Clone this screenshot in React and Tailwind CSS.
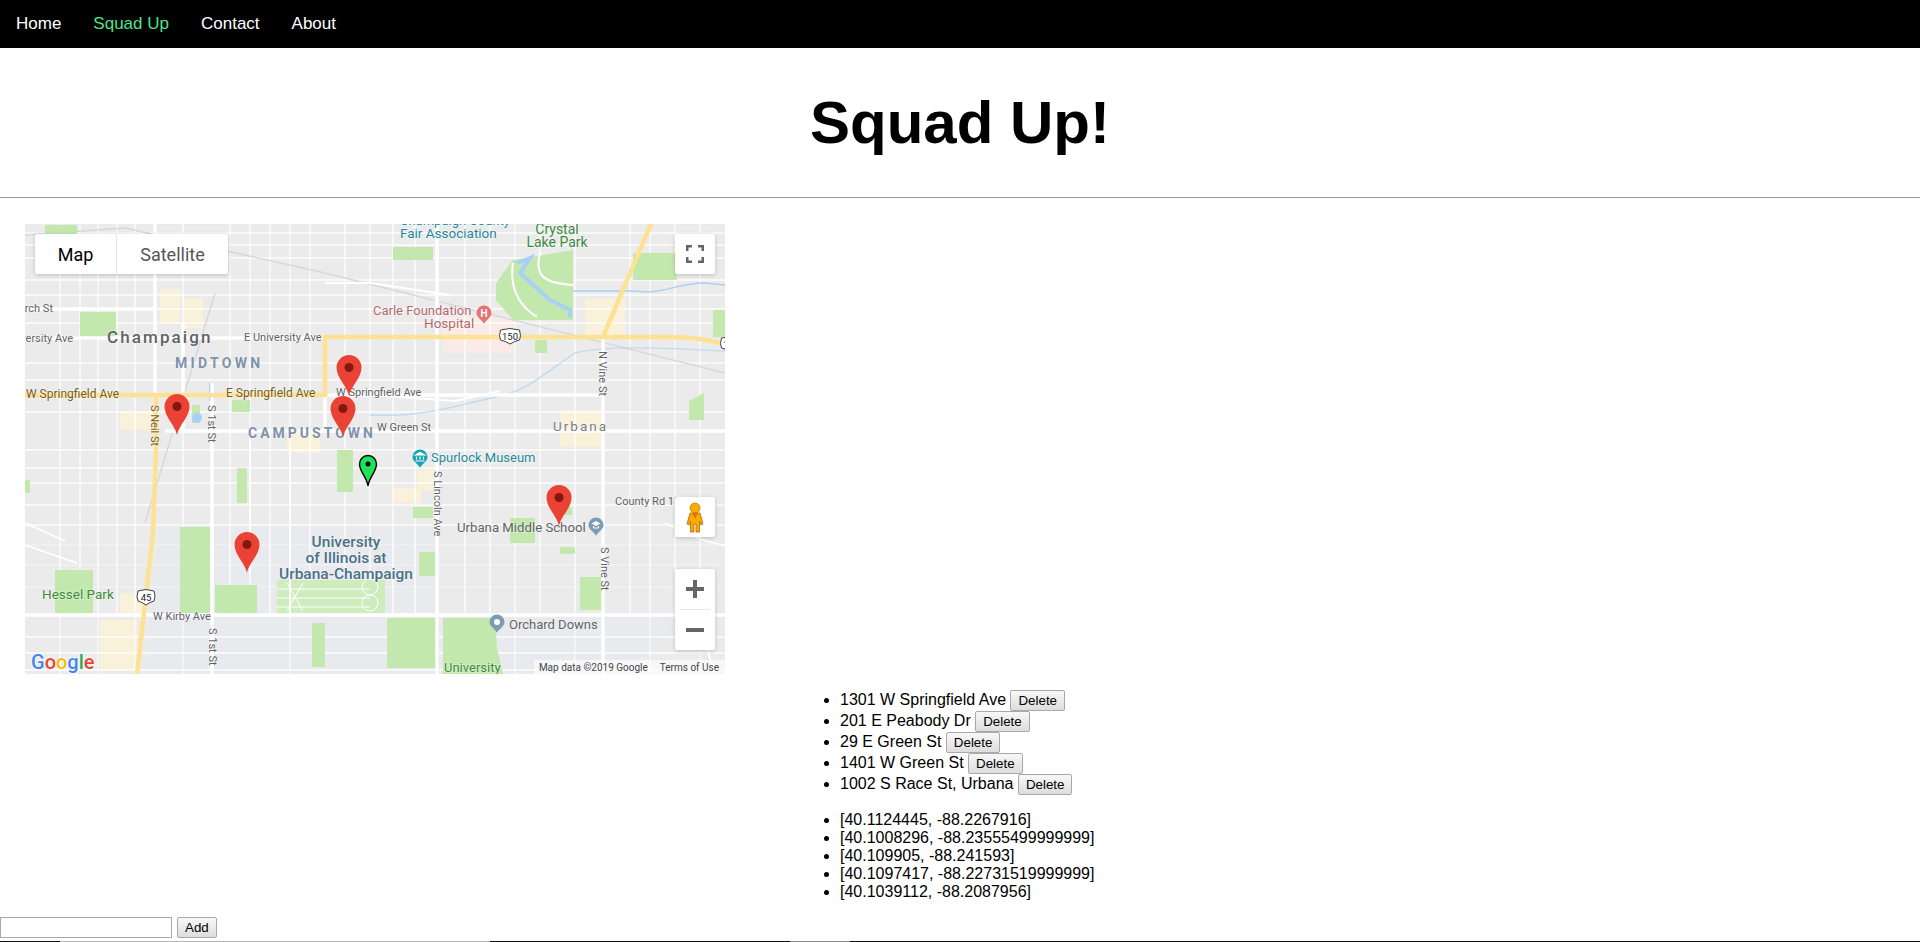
import React from 'react'

const minorY = [10, 22, 35, 57, 72, 86, 100, 140, 157, 189, 227, 245, 260, 282, 302, 322, 342, 364, 414, 430, 447]
const minorX = [35, 55, 73, 92, 110, 158, 205, 225, 245, 265, 285, 320, 345, 368, 390, 440, 465, 490, 515, 550, 605, 625, 650, 675]

const parks = [
  [55, 89, 36, 25], [20, 2, 32, 9], [368, 24, 40, 13], [608, 30, 44, 27], [510, 117, 12, 13],
  [688, 87, 12, 27], [155, 304, 30, 86], [30, 347, 38, 43], [212, 245, 10, 35], [312, 227, 16, 42],
  [190, 362, 42, 28], [362, 395, 51, 50], [485, 295, 25, 25], [555, 354, 23, 33],
  [394, 329, 18, 24], [388, 284, 20, 11], [287, 400, 13, 44], [167, 182, 8, 18], [207, 177, 18, 12],
  [533, 284, 14, 8], [535, 324, 15, 7], [0, 257, 5, 13],
]

const beige = [
  [135, 66, 20, 35], [158, 75, 20, 30], [95, 189, 33, 18], [560, 76, 40, 38], [535, 187, 43, 37], [75, 397, 37, 50],
  [95, 370, 23, 24], [262, 210, 33, 20], [368, 265, 28, 15], [392, 247, 16, 20],
]

const MapText = ({ x, y, size = 11, color = '#5f6368', weight = 400, spacing, anchor, rotate, children }) => (
  <text
    x={x}
    y={y}
    fontSize={size}
    fill={color}
    fontWeight={weight}
    letterSpacing={spacing}
    textAnchor={anchor}
    transform={rotate ? `rotate(90 ${x} ${y})` : undefined}
    fontFamily="Roboto, sans-serif"
    stroke="#ffffff"
    strokeWidth="1.6"
    strokeOpacity="0.4"
    paintOrder="stroke"
  >
    {children}
  </text>
)

const Pin = ({ x, y }) => (
  <g transform={`translate(${x} ${y})`}>
    <path d="M0 0C-2-10-12.5-18-12.5-28.5A12.5 12.5 0 1 1 12.5-28.5C12.5-18 2-10 0 0Z" fill="#ea4335" />
    <circle cx="0" cy="-28.5" r="4.5" fill="#84170f" />
  </g>
)

const GreenPin = ({ x, y }) => (
  <g transform={`translate(${x} ${y})`}>
    <path d="M0 0C-1-9-8.5-14-8.5-22A8.5 8.5 0 1 1 8.5-22C8.5-14 1-9 0 0Z" fill="#1fe25b" stroke="#000000" strokeWidth="1.4" />
    <circle cx="0" cy="-22" r="2.5" fill="#000000" />
  </g>
)

const Poi = ({ x, y, color, children }) => (
  <g transform={`translate(${x} ${y})`}>
    <path d="M0 10C-1.5 6-7.5 3.5-7.5-1A7.5 7.5 0 1 1 7.5-1C7.5 3.5 1.5 6 0 10Z" fill={color} />
    {children}
  </g>
)

const Shield = ({ x, y, label, width = 20 }) => (
  <g transform={`translate(${x} ${y})`}>
    <path
      d={`M${-width / 2}-6Q0-9 ${width / 2}-6Q${width / 2 + 2} 0 ${width / 2}  4Q${width / 4} 5 0 8Q${-width / 4} 5 ${-width / 2} 4Q${-width / 2 - 2} 0 ${-width / 2}-6Z`}
      fill="#ffffff"
      stroke="#3c4043"
      strokeWidth="1"
    />
    <text x="0" y="3.5" fontSize="9.5" textAnchor="middle" fill="#202124" fontFamily="Roboto, sans-serif">{label}</text>
  </g>
)

const MapCanvas = () => (
  <svg viewBox="0 0 700 450" className="block w-[700px] h-[450px]">
    <rect width="700" height="450" fill="#ebebeb" />
    <g transform="translate(0 -1)">
      {/* campus ground */}
      <polygon points="120,451 135,302 250,302 250,451" fill="#e8eaed" />
      <polygon points="250,392 700,392 700,395 580,451 250,451" fill="#e8eaed" />
      <polygon points="250,302 412,302 412,392 250,392" fill="#e8eaed" />

      {beige.map(([x, y, w, h]) => <rect key={`${x}-${y}`} x={x} y={y} width={w} height={h} fill="#f9f1da" />)}
      <rect x="418" y="94" width="70" height="36" fill="#faebe7" />

      {minorY.map((y) => (
        <line key={y} x1="0" x2="700" y1={y} y2={y} stroke="#ffffff" strokeWidth="1.4" opacity={y > 302 && y < 392 ? 0.35 : 0.9} />
      ))}
      {minorX.map((x) => <line key={x} x1={x} x2={x} y1="0" y2="392" stroke="#ffffff" strokeWidth="1.4" opacity="0.9" />)}
      <path d="M35 392V451M73 392V451M110 392V451M158 392V451M265 392V451M490 392V451M550 392V451M625 392V451M675 392V451" stroke="#ffffff" strokeWidth="1.2" opacity="0.8" />
      <path d="M0 322L52 340M0 300L40 318M640 300C660 310 680 320 700 322M660 355L690 451" stroke="#ffffff" strokeWidth="1.8" fill="none" />
      <path d="M190 70L120 300" stroke="#d8d8d8" strokeWidth="1.5" fill="none" />
      <path d="M0 12L100 5L300 50L700 150" stroke="#d8d8d8" strokeWidth="1.5" fill="none" />

      {parks.map(([x, y, w, h]) => <rect key={`${x}-${y}`} x={x} y={y} width={w} height={h} rx="1" fill="#c3e8ae" />)}
      <polygon points="471,60 488,37 548,27 548,97 488,97 471,77" fill="#c3e8ae" />
      <polygon points="418,395 470,395 472,425 478,451 418,451" fill="#c3e8ae" />
      <polygon points="664,178 679,170 679,197 664,197" fill="#c3e8ae" />

      {/* quad and its walks */}
      <rect x="252" y="357" width="108" height="33" fill="#cfecbd" />
      <path d="M252 366H345M252 375H345M252 384H345M262 360L278 388M278 360L262 388" stroke="#ffffff" strokeWidth="1" />
      <circle cx="345" cy="364" r="8" fill="none" stroke="#ffffff" />
      <circle cx="345" cy="380" r="8" fill="none" stroke="#ffffff" />

      {/* water */}
      <path d="M492 40L505 35L495 50L525 77L545 87V95" stroke="#a9d0f5" strokeWidth="4" fill="none" />
      <path d="M488 40C485 60 490 80 512 94M515 30C510 50 515 60 548 62" stroke="#ffffff" strokeWidth="2" fill="none" />
      <path d="M548 68H610C640 72 650 60 680 60L700 62" stroke="#a9d0f5" strokeWidth="1.3" fill="none" />
      <path d="M345 192C400 195 440 180 480 172C505 165 520 150 550 130C580 122 640 125 700 128" stroke="#b8d6f0" strokeWidth="1.3" fill="none" opacity="0.8" />
      <path d="M186 160V178" stroke="#a9d0f5" strokeWidth="4" />
      <circle cx="172" cy="195" r="5" fill="#a9d0f5" />

      {/* big white streets */}
      <path d="M130 0V172M187 160V451M412 0V451M578 114V451M0 392H700M0 115H300M140 208H700M300 172H580M0 86H130M300 115V208M158 100V208" stroke="#ffffff" strokeWidth="3.5" fill="none" />
      <path d="M300 60H345L425 72M345 172L430 178L475 168M225 205V350M265 225V392" stroke="#ffffff" strokeWidth="2" fill="none" />

      {/* yellow roads */}
      <path d="M0 172H300V114H640C665 114 685 116 700 122" stroke="#fde293" strokeWidth="4.5" fill="none" />
      <path d="M578 114L628 -4" stroke="#fde293" strokeWidth="4.5" fill="none" />
      <path d="M131 172V227L128 310L112 451" stroke="#fde293" strokeWidth="4.5" fill="none" />

      <MapText x={28} y={89} anchor="end">Church St</MapText>
      <MapText x={48} y={119} anchor="end">University Ave</MapText>
      <MapText x={219} y={118}>E University Ave</MapText>
      <MapText x={82} y={120} size={17} weight={500} spacing={2.1}>Champaign</MapText>
      <MapText x={150} y={145} size={14} weight={700} spacing={3.3} color="#7f92ac">MIDTOWN</MapText>
      <MapText x={1} y={175} size={12} color="#795c17">W Springfield Ave</MapText>
      <MapText x={201} y={174} size={12} color="#795c17">E Springfield Ave</MapText>
      <MapText x={311} y={173}>W Springfield Ave</MapText>
      <MapText x={126} y={182} rotate color="#795c17">S Neil St</MapText>
      <MapText x={183} y={182} rotate>S 1st St</MapText>
      <MapText x={184} y={405} rotate>S 1st St</MapText>
      <MapText x={223} y={215} size={14} weight={700} spacing={3} color="#7f92ac">CAMPUSTOWN</MapText>
      <MapText x={352} y={208}>W Green St</MapText>
      <MapText x={528} y={208} size={13.5} spacing={2} color="#7b7f85">Urbana</MapText>
      <MapText x={406} y={239} size={13} color="#1f8a99">Spurlock Museum</MapText>
      <MapText x={409} y={248} rotate>S Lincoln Ave</MapText>
      <MapText x={375} y={2} size={13} color="#1f8a99">Champaign County</MapText>
      <MapText x={375} y={15} size={13.5} color="#1f8a99">Fair Association</MapText>
      <MapText x={532} y={11} size={14} anchor="middle" color="#3c8a3f">Crystal</MapText>
      <MapText x={532} y={24} size={14} anchor="middle" color="#3c8a3f">Lake Park</MapText>
      <MapText x={348} y={92} size={13} color="#b3696a">Carle Foundation</MapText>
      <MapText x={399} y={105} size={13.5} color="#b3696a">Hospital</MapText>
      <MapText x={574} y={128} rotate>N Vine St</MapText>
      <MapText x={576} y={324} rotate>S Vine St</MapText>
      <MapText x={590} y={282}>County Rd 15</MapText>
      <MapText x={432} y={309} size={13.2}>Urbana Middle School</MapText>
      <MapText x={484} y={406} size={13}>Orchard Downs</MapText>
      <MapText x={419} y={449} size={13} color="#3c8a3f">University</MapText>
      <MapText x={321} y={324} size={15.5} weight={500} anchor="middle" color="#4a7186">University</MapText>
      <MapText x={321} y={340} size={15.5} weight={500} anchor="middle" color="#4a7186">of Illinois at</MapText>
      <MapText x={321} y={356} size={15.5} weight={500} anchor="middle" color="#4a7186">Urbana-Champaign</MapText>
      <MapText x={128} y={397}>W Kirby Ave</MapText>
      <MapText x={17} y={376} size={13.5} color="#3c8a3f">Hessel Park</MapText>

      <Shield x={485} y={113} label="150" width={19} />
      <Shield x={706} y={121} label="150" width={19} />
      <Shield x={121} y={374} label="45" width={16} />

      <Poi x={459} y={91} color="#e57373">
        <text x="0" y="3" fontSize="10" textAnchor="middle" fill="#ffffff" fontWeight="700" fontFamily="Roboto, sans-serif">H</text>
      </Poi>
      <Poi x={395} y={235} color="#12a5b5">
        <path d="M-4.5 3H4.5M-3.5 1.5V-1.5M0 1.5V-1.5M3.5 1.5V-1.5M-4.5-3L0-5.5L4.5-3Z" stroke="#ffffff" strokeWidth="1.2" fill="#ffffff" />
      </Poi>
      <Poi x={571} y={303} color="#7c9cb4">
        <path d="M-4.5-2.5L0-5L4.5-2.5L0 0Z" fill="#ffffff" />
        <path d="M-2.5 0V2H2.5V0" stroke="#ffffff" fill="none" />
      </Poi>
      <Poi x={472} y={400} color="#7c9cb4">
        <circle cx="0" cy="-1" r="3" fill="#ffffff" />
      </Poi>

      <Pin x={152} y={212} />
      <Pin x={324} y={173} />
      <Pin x={318} y={214} />
      <Pin x={222} y={350} />
      <Pin x={534} y={303} />
      <GreenPin x={343} y={263} />

      {/* google mark */}
      <text x={6} y={446} fontSize="20" fontWeight="500" fontFamily="Roboto, sans-serif" stroke="#ffffff" strokeWidth="2" strokeOpacity="0.7" paintOrder="stroke">
        <tspan fill="#4285f4">G</tspan>
        <tspan fill="#ea4335">o</tspan>
        <tspan fill="#fbbc05">o</tspan>
        <tspan fill="#4285f4">g</tspan>
        <tspan fill="#34a853">l</tspan>
        <tspan fill="#ea4335">e</tspan>
      </text>
    </g>
  </svg>
)

const MapWidget = () => (
  <div className="relative w-[700px] h-[450px] overflow-hidden font-['Roboto',sans-serif]">
    <MapCanvas />

    <div className="absolute left-[10px] top-[10px] flex h-10 w-[193px] bg-white rounded-[2px] shadow-[0_1px_4px_rgba(0,0,0,0.2)] text-[18px]">
      <div className="flex w-[82px] items-center justify-center border-r border-[#e6e6e6] text-black">Map</div>
      <div className="flex flex-1 items-center justify-center text-[#565656]">Satellite</div>
    </div>

    <div className="absolute left-[650px] top-[10px] flex h-10 w-10 items-center justify-center bg-white rounded-[2px] shadow-[0_1px_4px_rgba(0,0,0,0.2)]">
      <svg width="18" height="18" viewBox="0 0 18 18">
        <path d="M1.25 6V1.25H6M12 1.25H16.75V6M16.75 12V16.75H12M6 16.75H1.25V12" fill="none" stroke="#666666" strokeWidth="2.5" />
      </svg>
    </div>

    <div className="absolute left-[650px] top-[273px] flex h-10 w-10 items-center justify-center bg-white rounded-[2px] shadow-[0_1px_4px_rgba(0,0,0,0.2)]">
      <svg width="40" height="40" viewBox="0 0 40 40">
        <circle cx="20" cy="11" r="5" fill="#f9ab00" stroke="#c77f00" strokeWidth="0.8" />
        <path d="M15 16H25L28 27L26 28L24.5 24V35H21V27H19V35H15.5V24L14 28L12 27Z" fill="#f9ab00" stroke="#b06a00" strokeWidth="0.8" />
        <path d="M17 16H23L20 22Z" fill="#e8710a" />
      </svg>
    </div>

    <div className="absolute left-[650px] top-[345px] flex h-[81px] w-10 flex-col items-center bg-white rounded-[2px] shadow-[0_1px_4px_rgba(0,0,0,0.2)]">
      <div className="flex h-10 items-center justify-center">
        <svg width="18" height="18" viewBox="0 0 18 18"><path d="M0 9H18M9 0V18" stroke="#666666" strokeWidth="4" /></svg>
      </div>
      <div className="h-px w-[30px] bg-[#e6e6e6]"></div>
      <div className="flex h-10 items-center justify-center">
        <svg width="18" height="18" viewBox="0 0 18 18"><path d="M0 9H18" stroke="#666666" strokeWidth="4" /></svg>
      </div>
    </div>

    <div className="absolute bottom-0 right-0 flex h-[14px] items-center gap-[12px] bg-white/60 pl-[5px] pr-[6px] text-[10px] text-[#444444]">
      <span>Map data ©2019 Google</span>
      <span>Terms of Use</span>
    </div>
  </div>
)

const addresses = ['1301 W Springfield Ave', '201 E Peabody Dr', '29 E Green St', '1401 W Green St', '1002 S Race St, Urbana']
const coords = ['[40.1124445, -88.2267916]', '[40.1008296, -88.23555499999999]', '[40.109905, -88.241593]', '[40.1097417, -88.22731519999999]', '[40.1039112, -88.2087956]']

const btn = "h-[21px] rounded-[2px] border border-[#a9a9a9] bg-gradient-to-b from-[#f8f8f8] to-[#dddddd] px-[7px] text-[13.33px] text-black align-middle leading-none"

const App = () => {
  return (
    <div className="flex h-[942px] flex-col overflow-hidden bg-white font-['Liberation_Sans',Arial,sans-serif] text-black">
      <nav className="flex h-12 shrink-0 items-center bg-black text-[17px] text-white">
        <a href="#" className="pl-4 pr-4">Home</a>
        <a href="#" className="px-4 text-[#4ae68a]">Squad Up</a>
        <a href="#" className="px-4">Contact</a>
        <a href="#" className="px-4">About</a>
      </nav>

      <h1 className="border-b border-[#999999] py-10 text-center text-[60px] font-bold leading-[69px] h-[150px]">Squad Up!</h1>

      <div className="pl-[25px] pt-[26px]">
        <MapWidget />
      </div>

      <div className="flex">
        <div className="w-[800px] shrink-0"></div>
        <div>
          <ul className="mt-[15px] list-disc pl-10 text-[16px]">
            {addresses.map((a) => (
              <li key={a} className="h-[21px] leading-[21px]">
                {a} <button className={btn}>Delete</button>
              </li>
            ))}
          </ul>
          <ul className="mt-[17px] list-disc pl-10 text-[16px] leading-[18px]">
            {coords.map((c) => <li key={c}>{c}</li>)}
          </ul>
        </div>
      </div>

      <div className="mt-[16px] flex items-center gap-[5px]">
        <input className="h-[21px] w-[172px] border border-[#a9a9a9] bg-white" />
        <button className={btn}>Add</button>
      </div>

      <div className="mt-auto flex h-px shrink-0 bg-[#111111]">
        <div className="w-[60px]"></div>
        <div className="w-[430px] bg-[#b5b5b5]"></div>
        <div className="w-[300px]"></div>
        <div className="w-[60px] bg-[#8a8a8a]"></div>
      </div>
    </div>
  )
}

export default App
